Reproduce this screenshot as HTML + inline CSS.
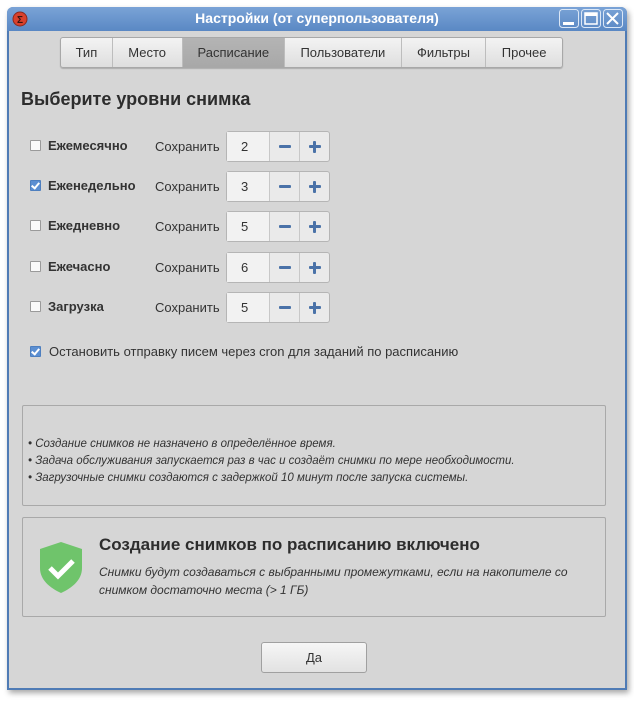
<!DOCTYPE html>
<html><head><meta charset="utf-8"><style>
*{margin:0;padding:0;box-sizing:border-box}
body{width:634px;height:702px;background:#fff;font-family:"Liberation Sans",sans-serif;color:#333;position:relative;overflow:hidden}
.win{position:absolute;left:7px;top:7px;width:620px;height:683px;background:#4f7bb5;border-radius:6px 6px 0 0;box-shadow:2px 3px 6px rgba(0,0,0,.35)}
.title{position:absolute;left:0;top:0;width:620px;height:24px;background:linear-gradient(#7aa3d6,#5a88c4);border-radius:6px 6px 0 0;color:#fff;font-weight:bold;font-size:14px;text-align:center;line-height:22px}
.content{position:absolute;left:2px;top:24px;width:616px;height:657px;background:#d6d6d6}
.a{position:absolute}
.tabs{left:51px;top:6px;height:31px;width:503px;border:1px solid #a8a8a8;border-radius:3px;display:flex;background:linear-gradient(#f3f3f3,#dedede);box-shadow:0 1px 1px rgba(0,0,0,.2)}
.tabs div{font-size:13px;text-align:center;line-height:29px;border-right:1px solid #bdbdbd;color:#333}
.tabs .sel{background:linear-gradient(#b4b4b4,#a8a8a8)}
.cb{width:11px;height:11px;border:1px solid #9a9a9a;background:#fafafa;border-radius:1px}
.cb.on{background:#5c8fd2;border-color:#4e7fbf}
.cb.on:after{content:"";position:absolute;left:2px;top:0px;width:3px;height:6px;border:solid #fff;border-width:0 2px 2px 0;transform:rotate(40deg)}
.lbl{font-size:13px;font-weight:bold;color:#333}
.keep{font-size:13px;color:#333}
.spin{width:104px;height:31px;border:1px solid #b5b5b5;border-radius:3px;background:#eaeaea;display:flex}
.spin .v{width:44px;background:#f2f2f2;font-size:13px;line-height:29px;padding-left:14px;border-right:1px solid #c8c8c8}
.spin .b{width:30px;position:relative;border-right:1px solid #c8c8c8}
.spin .b:last-child{border-right:0}
.minus:before,.plus:before,.plus:after{content:"";position:absolute;background:#4a72a8;border-radius:1px}
.minus:before,.plus:before{left:9px;top:13px;width:12px;height:3px}
.plus:after{left:13.5px;top:8.5px;width:3px;height:12px}
.box{border:1px solid #a9a9a9;background:#d6d6d6;border-radius:2px}
.it{font-style:italic;font-size:11.5px;color:#333;line-height:17px}
</style></head><body>
<div class="win">
<div class="title">Настройки (от суперпользователя)
<svg class="a" style="left:5px;top:4px" width="16" height="16"><circle cx="8" cy="8" r="7" fill="#d9412c" stroke="#8a2a1f"/><text x="8" y="12" font-size="10" fill="#3a1410" text-anchor="middle" font-family="Liberation Sans">Σ</text></svg>
<svg class="a" style="left:552px;top:2px" width="64" height="20"><g fill="none" stroke="#dbe7f6" stroke-width="1"><rect x="0.5" y="0.5" width="19" height="18" rx="3"/><rect x="22.5" y="0.5" width="19" height="18" rx="3"/><rect x="44.5" y="0.5" width="19" height="18" rx="3"/></g><rect x="4" y="13" width="11" height="3" fill="#fff"/><rect x="26" y="4" width="12" height="11" fill="none" stroke="#fff" stroke-width="1.5"/><rect x="26" y="4" width="12" height="3" fill="#fff"/><path d="M48 4l11 11M59 4l-11 11" stroke="#fff" stroke-width="2"/></svg>
</div>
<div class="content">
<div class="a tabs"><div style="width:52px">Тип</div><div style="width:70px">Место</div><div class="sel" style="width:103px">Расписание</div><div style="width:117px">Пользователи</div><div style="width:85px">Фильтры</div><div style="width:76px;border:0">Прочее</div></div>
<div class="a" style="left:12px;top:58px;font-size:18px;font-weight:bold;color:#2d2d2d">Выберите уровни снимка</div>

<div class="a cb" style="left:21px;top:109px"></div><div class="a lbl" style="left:39px;top:107px">Ежемесячно</div><div class="a keep" style="left:146px;top:108px">Сохранить</div>
<div class="a spin" style="left:217px;top:100px"><div class="v">2</div><div class="b minus"></div><div class="b plus"></div></div>

<div class="a cb on" style="left:21px;top:149px"></div><div class="a lbl" style="left:39px;top:147px">Еженедельно</div><div class="a keep" style="left:146px;top:148px">Сохранить</div>
<div class="a spin" style="left:217px;top:140px"><div class="v">3</div><div class="b minus"></div><div class="b plus"></div></div>

<div class="a cb" style="left:21px;top:189px"></div><div class="a lbl" style="left:39px;top:187px">Ежедневно</div><div class="a keep" style="left:146px;top:188px">Сохранить</div>
<div class="a spin" style="left:217px;top:180px"><div class="v">5</div><div class="b minus"></div><div class="b plus"></div></div>

<div class="a cb" style="left:21px;top:230px"></div><div class="a lbl" style="left:39px;top:228px">Ежечасно</div><div class="a keep" style="left:146px;top:229px">Сохранить</div>
<div class="a spin" style="left:217px;top:221px"><div class="v">6</div><div class="b minus"></div><div class="b plus"></div></div>

<div class="a cb" style="left:21px;top:270px"></div><div class="a lbl" style="left:39px;top:268px">Загрузка</div><div class="a keep" style="left:146px;top:269px">Сохранить</div>
<div class="a spin" style="left:217px;top:261px"><div class="v">5</div><div class="b minus"></div><div class="b plus"></div></div>

<div class="a cb on" style="left:21px;top:315px"></div><div class="a keep" style="left:40px;top:313px">Остановить отправку писем через cron для заданий по расписанию</div>

<div class="a box" style="left:13px;top:374px;width:584px;height:101px"></div>
<div class="a it" style="left:19px;top:405px">• Создание снимков не назначено в определённое время.<br>• Задача обслуживания запускается раз в час и создаёт снимки по мере необходимости.<br>• Загрузочные снимки создаются с задержкой 10 минут после запуска системы.</div>

<div class="a box" style="left:13px;top:486px;width:584px;height:100px"></div>
<svg class="a" style="left:29px;top:509px" width="46" height="54"><path d="M23 2 L44 9 V28 C44 40 34 48 23 53 C12 48 2 40 2 28 V9 Z" fill="#6fc46b"/><path d="M12 28l8 8 15-15" fill="none" stroke="#fff" stroke-width="5"/></svg>
<div class="a" style="left:90px;top:504px;font-size:17px;font-weight:bold;color:#2d2d2d">Создание снимков по расписанию включено</div>
<div class="a it" style="left:90px;top:532px;font-size:12px;line-height:18px">Снимки будут создаваться с выбранными промежутками, если на накопителе со<br>снимком достаточно места (&gt; 1 ГБ)</div>

<div class="a" style="left:252px;top:611px;width:106px;height:31px;border:1px solid #a0a0a0;border-radius:3px;background:linear-gradient(#f6f6f6,#e2e2e2);font-size:13px;text-align:center;line-height:29px">Да</div>
</div>
</div>
</body></html>
